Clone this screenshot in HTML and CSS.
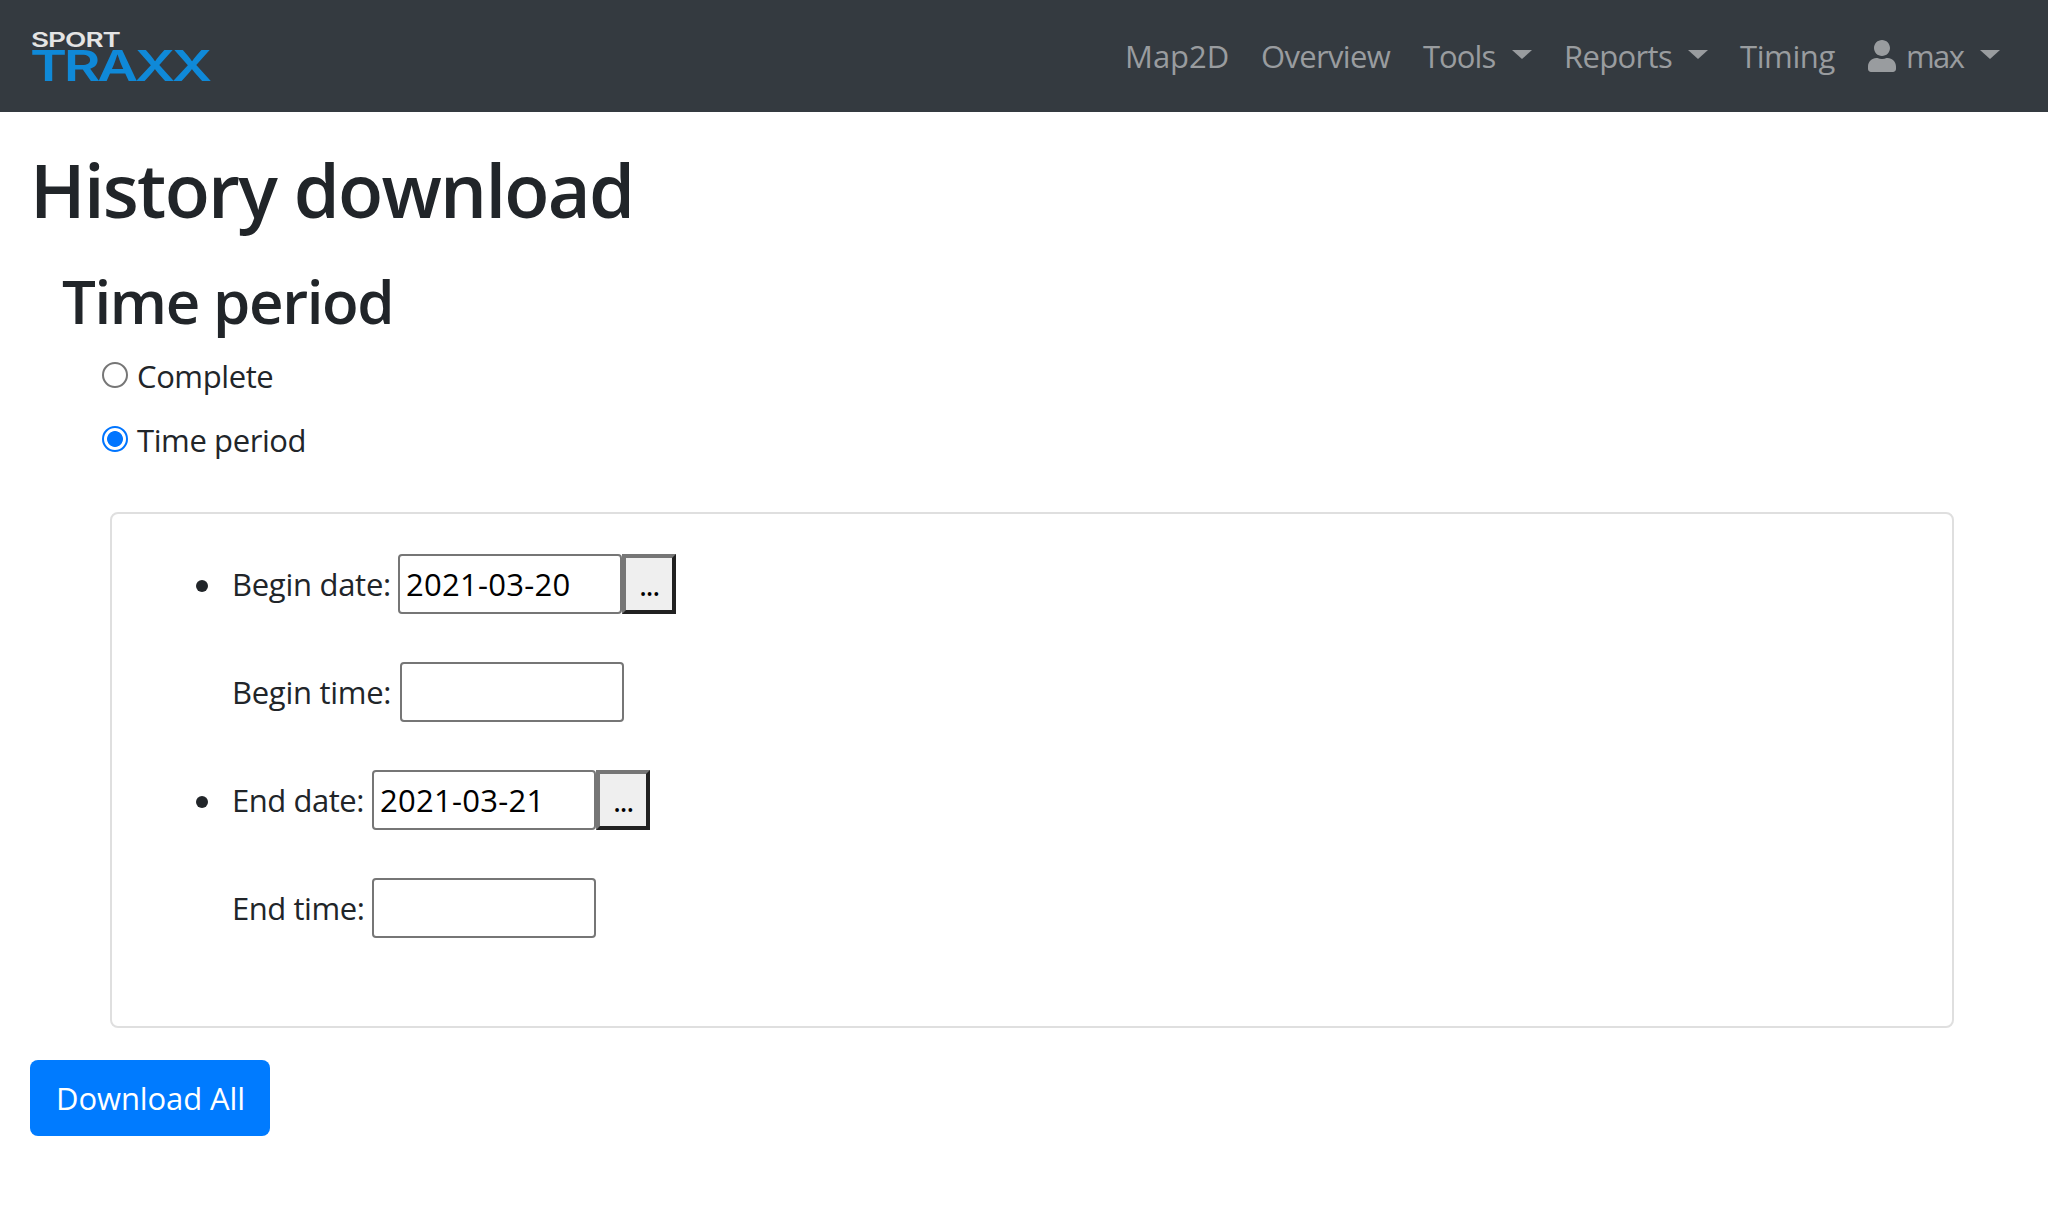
FILE: index.html
```
<!DOCTYPE html>
<html lang="en">
<head>
<meta charset="utf-8">
<title>History download</title>
<link rel="stylesheet" href="styles.css">
</head>
<body>
<nav class="navbar">
  <a class="brand">
    <svg width="184" height="56" viewBox="0 0 184 56" aria-label="Sport Traxx">
      <text class="brand-sport" x="-1" y="19" textLength="89" lengthAdjust="spacingAndGlyphs">SPORT</text>
      <text class="brand-traxx" x="-2" y="53" textLength="179" lengthAdjust="spacingAndGlyphs">TRAXX</text>
    </svg>
  </a>
  <div class="nav-links">
    <a class="nav-link map">Map2D</a>
    <a class="nav-link overview">Overview</a>
    <a class="nav-link tools">Tools<i class="caret"></i></a>
    <a class="nav-link reports">Reports<i class="caret"></i></a>
    <a class="nav-link timing">Timing</a>
    <a class="nav-link user">
      <svg class="user-icon" width="28" height="32" viewBox="0 0 448 512"><path fill="currentColor" d="M224 256c70.7 0 128-57.3 128-128S294.7 0 224 0 96 57.3 96 128s57.3 128 128 128zm89.6 32h-16.7c-22.2 10.2-46.9 16-72.9 16s-50.6-5.8-72.9-16h-16.7C60.2 288 0 348.2 0 422.4V464c0 26.5 21.5 48 48 48h352c26.5 0 48-21.5 48-48v-41.6c0-74.2-60.2-134.4-134.4-134.4z"/></svg>
      <span>max</span><i class="caret"></i>
    </a>
  </div>
</nav>
<main>
  <h1>History download</h1>
  <section class="period">
    <h2>Time period</h2>
    <div class="choices">
      <label class="choice"><input type="radio" name="period">Complete</label>
      <label class="choice"><input type="radio" name="period" checked>Time period</label>
    </div>
    <ul class="card">
      <li>
        <div class="fields">
          <div class="field"><label class="begin">Begin date:</label><input type="text" value="2021-03-20"><button class="picker">...</button></div>
          <div class="field"><label class="begin begin-time">Begin time:</label><input type="text"></div>
        </div>
      </li>
      <li>
        <div class="fields">
          <div class="field"><label class="end">End date:</label><input type="text" value="2021-03-21"><button class="picker">...</button></div>
          <div class="field"><label class="end">End time:</label><input type="text"></div>
        </div>
      </li>
    </ul>
  </section>
  <button class="download">Download All</button>
</main>
</body>
</html>
```
FILE: styles.css
```
* { box-sizing: border-box; }
body {
  margin: 0;
  background: #fff;
  color: #212529;
  font: 400 31px/48px "Open Sans", "Noto Sans", sans-serif;
}
h1, h2 { margin: 0; font-weight: 600; white-space: nowrap; }

.navbar {
  display: flex;
  align-items: center;
  justify-content: space-between;
  height: 112px;
  padding: 0 48px 0 32px;
  background: #343a40;
}
.brand, .brand svg { display: block; }
.brand svg { overflow: visible; }
.brand text { font-family: Inter, "Liberation Sans", sans-serif; }
.brand-sport { font-size: 20.5px; font-weight: 600; letter-spacing: -.7px; fill: #e4e4e4; }
.brand-traxx { font-size: 42.5px; font-weight: 600; letter-spacing: -2.5px; fill: #0f89d8; }
.nav-links {
  display: grid;
  grid-template-columns: 136px 162px 141px 176px 128px 132px;
  color: #999c9f;
}
.nav-link { display: flex; align-items: center; white-space: nowrap; }
.map { letter-spacing: 0; }
.overview { letter-spacing: -.67px; }
.tools { letter-spacing: -.95px; padding-right: 32px; }
.reports { letter-spacing: -.65px; padding-right: 32px; }
.timing { letter-spacing: -.4px; }
.user { letter-spacing: -1.6px; }
.user-icon { margin-right: 10px; }
.caret {
  margin: -3px 0 0 auto;
  border: 10px solid transparent;
  border-top: 9px solid currentColor;
  border-bottom: 0;
}

main { padding: 33px 30px 0; }
h1 { font-size: 74px; line-height: 90px; letter-spacing: -1.72px; }
.period { padding: 28px 64px 32px 32px; }
h2 { font-size: 60px; line-height: 76px; letter-spacing: -1.4px; }
.choices { display: grid; gap: 16px; padding: 13px 0 48px 40px; }
.choice { display: flex; align-items: center; gap: 9px; letter-spacing: -.4px; }
.choice input {
  appearance: none;
  width: 26px;
  height: 26px;
  margin: -2px 0 0;
  border: 2px solid #767676;
  border-radius: 50%;
}
.choice input:checked {
  border-color: #0075ff;
  background: radial-gradient(circle, #0075ff 7.5px, transparent 8.3px);
}

.card {
  display: grid;
  align-content: start;
  gap: 48px;
  height: 516px;
  margin: 0 0 0 48px;
  padding: 40px 0 0 84px;
  border: 2px solid #dfdfdf;
  border-radius: 8px;
  list-style: none;
}
.card li { display: flex; }
.card li::before {
  content: "";
  width: 12px;
  height: 12px;
  margin: 26px 24px 0 0;
  border-radius: 50%;
  background: #212529;
}
.fields { display: grid; gap: 48px; }
.field { display: flex; align-items: center; }
.begin { width: 166px; letter-spacing: -.28px; white-space: nowrap; }
.begin-time { width: 168px; }
.end { width: 140px; letter-spacing: -.45px; white-space: nowrap; }
.field input {
  width: 224px;
  height: 60px;
  padding: 0 6px;
  border: 2px solid #767676;
  border-radius: 4px;
  background: #fff;
  color: #000;
  font: inherit;
  letter-spacing: .27px;
}
.picker {
  width: 54px;
  height: 60px;
  padding: 0;
  border: 4px solid;
  border-color: #767676 #212121 #212121 #767676;
  border-radius: 0;
  background: #efefef;
  color: #000;
  font: inherit;
  letter-spacing: -1.4px;
}
.download {
  display: block;
  width: 240px;
  height: 76px;
  padding: 0 0 0 1px;
  border: 0;
  border-radius: 8px;
  background: #007bff;
  color: #fff;
  font: inherit;
  letter-spacing: -.1px;
}
```
